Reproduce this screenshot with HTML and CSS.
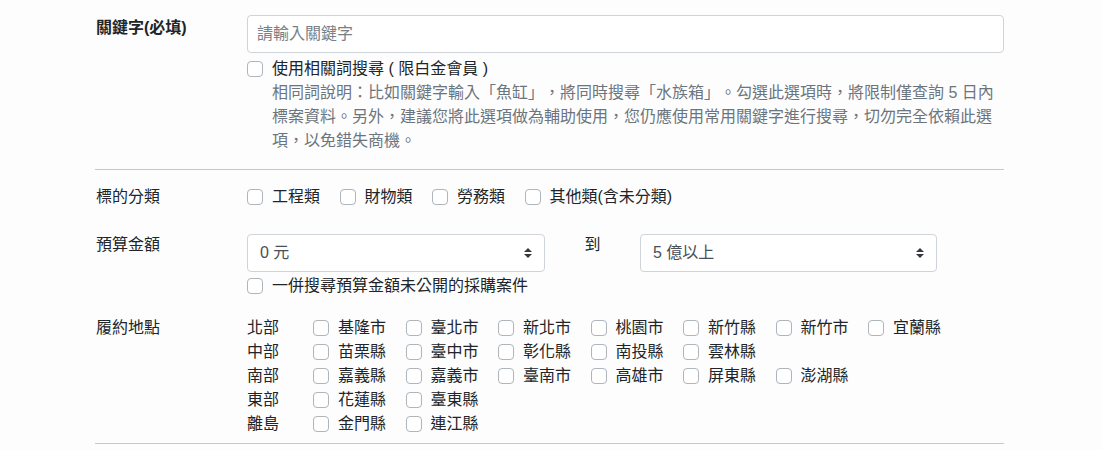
FILE: index.html
```html
<!DOCTYPE html>
<html lang="zh-Hant">
<head>
    <meta charset="UTF-8">
    <meta name="viewport" content="width=device-width, initial-scale=1.0">
    <title>標案搜尋</title>
    <link rel="stylesheet" href="styles.css">
</head>
<body>
    <div class="search-form">
        <!-- 關鍵字 -->
        <div class="form-row keyword-row">
            <div class="form-label required">關鍵字(必填)</div>
            <div class="form-field">
                <input type="text" class="text-input" placeholder="請輸入關鍵字">
                <label class="check">
                    <input type="checkbox">
                    <span>使用相關詞搜尋 ( 限白金會員 )</span>
                </label>
                <p class="note">相同詞說明：比如關鍵字輸入「魚缸」，將同時搜尋「水族箱」。勾選此選項時，將限制僅查詢 5 日內標案資料。另外，建議您將此選項做為輔助使用，您仍應使用常用關鍵字進行搜尋，切勿完全依賴此選項，以免錯失商機。</p>
            </div>
        </div>

        <hr class="divider">

        <!-- 標的分類 -->
        <div class="form-row type-row">
            <div class="form-label">標的分類</div>
            <div class="form-field inline-checks">
                <label class="check item"><input type="checkbox"><span>工程類</span></label>
                <label class="check item"><input type="checkbox"><span>財物類</span></label>
                <label class="check item"><input type="checkbox"><span>勞務類</span></label>
                <label class="check"><input type="checkbox"><span>其他類(含未分類)</span></label>
            </div>
        </div>

        <!-- 預算金額 -->
        <div class="form-row budget-row">
            <div class="form-label">預算金額</div>
            <div class="form-field">
                <div class="budget-grid">
                    <div class="select-wrap">
                        <select class="select-input">
                            <option>0 元</option>
                        </select>
                        <svg class="select-arrow" width="8" height="10" viewBox="0 0 8 10"><path d="M0 4 L4 0 L8 4 Z M0 6 L4 10 L8 6 Z" fill="#343a40"/></svg>
                    </div>
                    <div class="budget-to">到</div>
                    <div class="select-wrap">
                        <select class="select-input">
                            <option>5 億以上</option>
                        </select>
                        <svg class="select-arrow" width="8" height="10" viewBox="0 0 8 10"><path d="M0 4 L4 0 L8 4 Z M0 6 L4 10 L8 6 Z" fill="#343a40"/></svg>
                    </div>
                </div>
                <label class="check budget-check">
                    <input type="checkbox">
                    <span>一併搜尋預算金額未公開的採購案件</span>
                </label>
            </div>
        </div>

        <!-- 履約地點 -->
        <div class="form-row place-row">
            <div class="form-label">履約地點</div>
            <div class="form-field">
                <div class="area">
                    <span class="area-name">北部</span>
                    <label class="check item"><input type="checkbox"><span>基隆市</span></label>
                    <label class="check item"><input type="checkbox"><span>臺北市</span></label>
                    <label class="check item"><input type="checkbox"><span>新北市</span></label>
                    <label class="check item"><input type="checkbox"><span>桃園市</span></label>
                    <label class="check item"><input type="checkbox"><span>新竹縣</span></label>
                    <label class="check item"><input type="checkbox"><span>新竹市</span></label>
                    <label class="check item"><input type="checkbox"><span>宜蘭縣</span></label>
                </div>
                <div class="area">
                    <span class="area-name">中部</span>
                    <label class="check item"><input type="checkbox"><span>苗栗縣</span></label>
                    <label class="check item"><input type="checkbox"><span>臺中市</span></label>
                    <label class="check item"><input type="checkbox"><span>彰化縣</span></label>
                    <label class="check item"><input type="checkbox"><span>南投縣</span></label>
                    <label class="check item"><input type="checkbox"><span>雲林縣</span></label>
                </div>
                <div class="area">
                    <span class="area-name">南部</span>
                    <label class="check item"><input type="checkbox"><span>嘉義縣</span></label>
                    <label class="check item"><input type="checkbox"><span>嘉義市</span></label>
                    <label class="check item"><input type="checkbox"><span>臺南市</span></label>
                    <label class="check item"><input type="checkbox"><span>高雄市</span></label>
                    <label class="check item"><input type="checkbox"><span>屏東縣</span></label>
                    <label class="check item"><input type="checkbox"><span>澎湖縣</span></label>
                </div>
                <div class="area">
                    <span class="area-name">東部</span>
                    <label class="check item"><input type="checkbox"><span>花蓮縣</span></label>
                    <label class="check item"><input type="checkbox"><span>臺東縣</span></label>
                </div>
                <div class="area">
                    <span class="area-name">離島</span>
                    <label class="check item"><input type="checkbox"><span>金門縣</span></label>
                    <label class="check item"><input type="checkbox"><span>連江縣</span></label>
                </div>
            </div>
        </div>

        <hr class="divider">
    </div>
</body>
</html>
```

FILE: styles.css
```css
/* 全局樣式 */
* {
    margin: 0;
    padding: 0;
    box-sizing: border-box;
}

body {
    background-color: #fdfdfd;
    color: #212529;
    font-family: "Liberation Sans", "Noto Sans CJK TC", sans-serif;
    font-size: 16px;
    line-height: 24px;
    text-spacing-trim: space-all;
}

/* 表單容器 */
.search-form {
    width: 909px;
    margin-left: 95px;
}

.form-row {
    display: grid;
    grid-template-columns: 152px 1fr;
}

.form-label {
    padding-left: 1px;
}

.form-label.required {
    font-weight: bold;
    padding-top: 1px;
}

.divider {
    border: none;
    border-top: 1px solid #c8c8c8;
    height: 0;
}

/* 關鍵字 */
.keyword-row {
    padding-top: 15px;
    padding-bottom: 16px;
}

.text-input {
    display: block;
    width: 100%;
    height: 38px;
    padding: 0 9px;
    border: 1px solid #ced4da;
    border-radius: 4px;
    background-color: #fff;
    font: inherit;
    color: #495057;
}

.text-input::placeholder {
    color: #7a8087;
}

.keyword-row .check {
    margin-top: 4px;
}

.note {
    color: #6c757d;
    padding-left: 25px;
}

/* 勾選框 */
.check {
    display: flex;
    align-items: center;
    gap: 8px;
    white-space: nowrap;
}

.check input {
    appearance: none;
    -webkit-appearance: none;
    width: 16px;
    height: 16px;
    flex-shrink: 0;
    border: 1px solid #adb5bd;
    border-radius: 4px;
    background-color: #fff;
    margin: 0 1px 0 0;
}

.check.item {
    flex: 0 0 92.5px;
}

.inline-checks {
    display: flex;
}

/* 標的分類 */
.type-row {
    padding-top: 15px;
}

/* 預算金額 */
.budget-row {
    margin-top: 24px;
}

.budget-grid {
    display: grid;
    grid-template-columns: 298px 35px 297px;
    column-gap: 30px;
    margin-top: 1px;
}

.select-wrap {
    position: relative;
}

.select-input {
    display: block;
    width: 100%;
    height: 38px;
    padding: 0 12px;
    border: 1px solid #ced4da;
    border-radius: 4px;
    background-color: #fff;
    font: inherit;
    color: #495057;
    appearance: none;
    -webkit-appearance: none;
}

.select-arrow {
    position: absolute;
    right: 13px;
    top: 14px;
}

.budget-to {
    text-align: center;
    margin-top: -1px;
}

.budget-check {
    margin-top: 2px;
}

/* 履約地點 */
.place-row {
    margin-top: 18px;
    padding-bottom: 7px;
}

.area {
    display: flex;
}

.area-name {
    flex: 0 0 66px;
}
```
